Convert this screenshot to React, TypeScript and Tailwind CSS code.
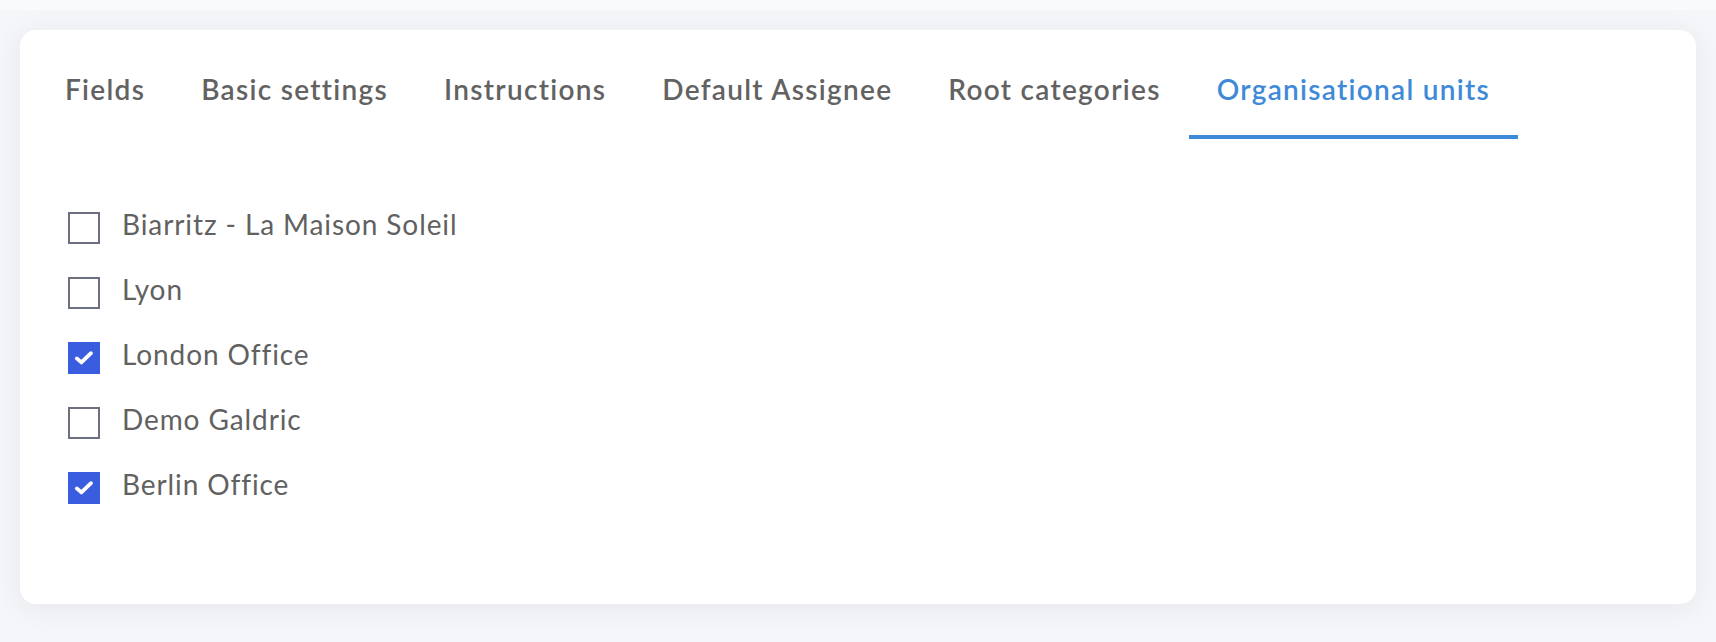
const tabs = [
  "Fields",
  "Basic settings",
  "Instructions",
  "Default Assignee",
  "Root categories",
  "Organisational units",
];

const units = [
  { name: "Biarritz - La Maison Soleil", checked: false },
  { name: "Lyon", checked: false },
  { name: "London Office", checked: true },
  { name: "Demo Galdric", checked: false },
  { name: "Berlin Office", checked: true },
];

const CheckBox = ({ checked }: { checked: boolean }) =>
  checked ? (
    <div className="w-[32px] h-[32px] bg-[#3a5ddf] flex items-center justify-center shrink-0">
      <svg width="20" height="16" viewBox="0 0 20 16" fill="none" className="mt-[1px]">
        <path d="M2.8 8.4 L7.4 12.4 L17 3.2" stroke="white" strokeWidth="3.8" strokeLinecap="round" strokeLinejoin="round" />
      </svg>
    </div>
  ) : (
    <div className="w-[32px] h-[32px] border-2 border-[#6c7081] bg-white shrink-0" />
  );

export default function App() {
  const active = "Organisational units";

  return (
    <div className="h-[642px] bg-[#f5f6f9] font-['Lato',sans-serif]">
      <div className="h-[10px] bg-[#f9fafc]" />
      <div className="mx-[20px] mt-[20px] h-[574px] bg-white rounded-2xl shadow-[0_4px_28px_rgba(30,40,80,0.07)] pt-[43px] px-[17px]">
        <div className="flex">
          {tabs.map((tab) => (
            <div
              key={tab}
              className={`px-[28px] pb-[28px] text-[28px] leading-[1.2] font-semibold tracking-[1.3px] border-b-4 ${
                tab === active ? "text-[#3f8ad8] border-[#3f8ad8]" : "text-[#626262] border-transparent"
              }`}
            >
              {tab}
            </div>
          ))}
        </div>

        <div className="mt-[73px] pl-[31px] flex flex-col gap-[33px]">
          {units.map((u) => (
            <label key={u.name} className="flex items-center gap-[22px] h-[32px]">
              <CheckBox checked={u.checked} />
              <span className="text-[28px] leading-[1.2] tracking-[0.9px] text-[#616161] pb-[5px]">{u.name}</span>
            </label>
          ))}
        </div>
      </div>
    </div>
  );
}
